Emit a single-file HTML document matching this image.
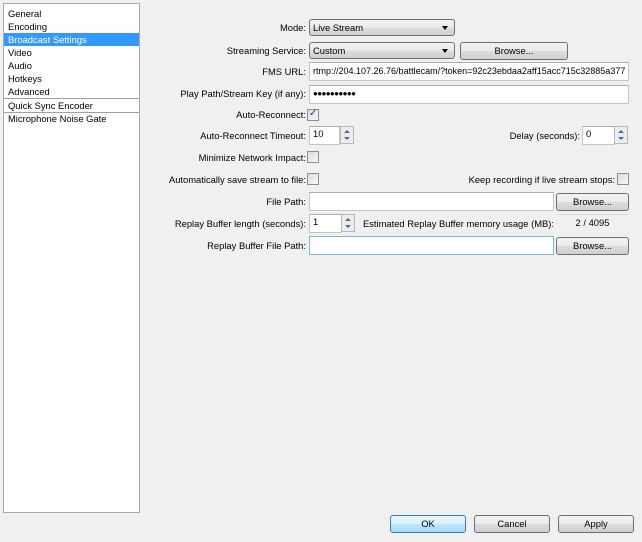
<!DOCTYPE html>
<html><head><meta charset="utf-8"><style>
*{box-sizing:border-box;margin:0;padding:0}
body{width:642px;height:542px;background:#f0f0f0;font-family:"Liberation Sans",sans-serif;font-size:9.4px;color:#000;position:relative;overflow:hidden}
.a{position:absolute}
.list{left:3px;top:3px;width:137px;height:510px;background:#fff;border:1px solid #aaa}
.it{position:absolute;left:0;width:135px;height:13px;line-height:13px;padding-left:4px}
.sel{background:#3399ff;color:#fff}
.sep{position:absolute;left:0;width:135px;height:1px;background:#a0a0a0}
.lbl{position:absolute;text-align:right;white-space:nowrap;line-height:12px}
.inp{position:absolute;background:#fff;border:1px solid #c6c6c6;border-top-color:#abadb3;padding-left:3px;line-height:16px;white-space:nowrap;overflow:hidden}
.btn{position:absolute;border:1px solid #707070;border-radius:3px;background:linear-gradient(#f2f2f2,#ebebeb 50%,#dddddd 51%,#cfcfcf);text-align:center;line-height:15px}
.cmb{position:absolute;border:1px solid #707070;border-radius:3px;background:linear-gradient(#f2f2f2,#ebebeb 50%,#dddddd 51%,#cfcfcf);padding-left:3px;line-height:15px}
.cmb:after{content:"";position:absolute;right:6px;top:6px;border-left:3.5px solid transparent;border-right:3.5px solid transparent;border-top:4px solid #000}
.chk{position:absolute;width:12px;height:12px;border:1px solid #8f8f8f;background:linear-gradient(135deg,#dcdcdc,#f8f8f8)}
.spb{position:absolute;width:14px;height:18px;border:1px solid #b8b8b8;background:#ececec}
.spb:before{content:"";position:absolute;left:3px;top:3px;border-left:3px solid transparent;border-right:3px solid transparent;border-bottom:3px solid #4a6a8a}
.spb:after{content:"";position:absolute;left:3px;top:10px;border-left:3px solid transparent;border-right:3px solid transparent;border-top:3px solid #4a6a8a}
</style></head><body>
<div class="a list">
<div class="it" style="top:3px">General</div>
<div class="it" style="top:16px">Encoding</div>
<div class="it sel" style="top:29px">Broadcast Settings</div>
<div class="it" style="top:42px">Video</div>
<div class="it" style="top:55px">Audio</div>
<div class="it" style="top:68px">Hotkeys</div>
<div class="it" style="top:81px">Advanced</div>
<div class="sep" style="top:94px"></div>
<div class="it" style="top:95px">Quick Sync Encoder</div>
<div class="sep" style="top:108px"></div>
<div class="it" style="top:108px">Microphone Noise Gate</div>
</div>

<div class="lbl" style="right:336px;top:22px">Mode:</div>
<div class="cmb" style="left:309px;top:19px;width:146px;height:17px">Live Stream</div>
<div class="lbl" style="right:336px;top:45px">Streaming Service:</div>
<div class="cmb" style="left:309px;top:42px;width:146px;height:17px">Custom</div>
<div class="btn" style="left:460px;top:42px;width:108px;height:18px">Browse...</div>
<div class="lbl" style="right:336px;top:66px">FMS URL:</div>
<div class="inp" style="left:309px;top:62px;width:320px;height:19px;font-size:9px">rtmp://204.107.26.76/battlecam/?token=92c23ebdaa2aff15acc715c32885a377</div>
<div class="lbl" style="right:336px;top:88px">Play Path/Stream Key (if any):</div>
<div class="inp" style="left:309px;top:85px;width:320px;height:19px;font-size:8px;letter-spacing:-0.6px">●●●●●●●●●●</div>
<div class="lbl" style="right:336px;top:109px">Auto-Reconnect:</div>
<div class="chk" style="left:307px;top:109px"><span style="position:absolute;left:1px;top:-2px;font-size:10px;color:#2a3d8f">✓</span></div>
<div class="lbl" style="right:336px;top:130px">Auto-Reconnect Timeout:</div>
<div class="inp" style="left:309px;top:126px;width:31px;height:19px;line-height:13px">10</div>
<div class="spb" style="left:340px;top:126px"></div>
<div class="lbl" style="right:62px;top:130px">Delay (seconds):</div>
<div class="inp" style="left:582px;top:126px;width:33px;height:19px;line-height:13px">0</div>
<div class="spb" style="left:614px;top:126px"></div>
<div class="lbl" style="right:336px;top:152px">Minimize Network Impact:</div>
<div class="chk" style="left:307px;top:151px"></div>
<div class="lbl" style="right:336px;top:174px">Automatically save stream to file:</div>
<div class="chk" style="left:307px;top:173px"></div>
<div class="lbl" style="right:27px;top:174px">Keep recording if live stream stops:</div>
<div class="chk" style="left:617px;top:173px"></div>
<div class="lbl" style="right:336px;top:196px">File Path:</div>
<div class="inp" style="left:309px;top:192px;width:245px;height:19px"></div>
<div class="btn" style="left:556px;top:193px;width:73px;height:18px">Browse...</div>
<div class="lbl" style="right:336px;top:218px">Replay Buffer length (seconds):</div>
<div class="inp" style="left:309px;top:214px;width:33px;height:19px;line-height:13px">1</div>
<div class="spb" style="left:341px;top:214px"></div>
<div class="lbl" style="right:88px;top:218px">Estimated Replay Buffer memory usage (MB):</div>
<div class="a" style="left:556px;top:214px;width:73px;height:18px;border-top:1px solid #dcdcdc;text-align:center;line-height:16px">2 / 4095</div>
<div class="lbl" style="right:336px;top:240px">Replay Buffer File Path:</div>
<div class="inp" style="left:309px;top:236px;width:245px;height:19px;border-color:#7eb4ea"></div>
<div class="btn" style="left:556px;top:237px;width:73px;height:18px">Browse...</div>

<div class="btn" style="left:390px;top:515px;width:76px;height:18px;border-color:#3c7fb1;background:linear-gradient(#eaf6fd,#d9f0fc 50%,#bee6fd 51%,#a7d9f5)">OK</div>
<div class="btn" style="left:474px;top:515px;width:76px;height:18px">Cancel</div>
<div class="btn" style="left:558px;top:515px;width:76px;height:18px">Apply</div>
</body></html>
